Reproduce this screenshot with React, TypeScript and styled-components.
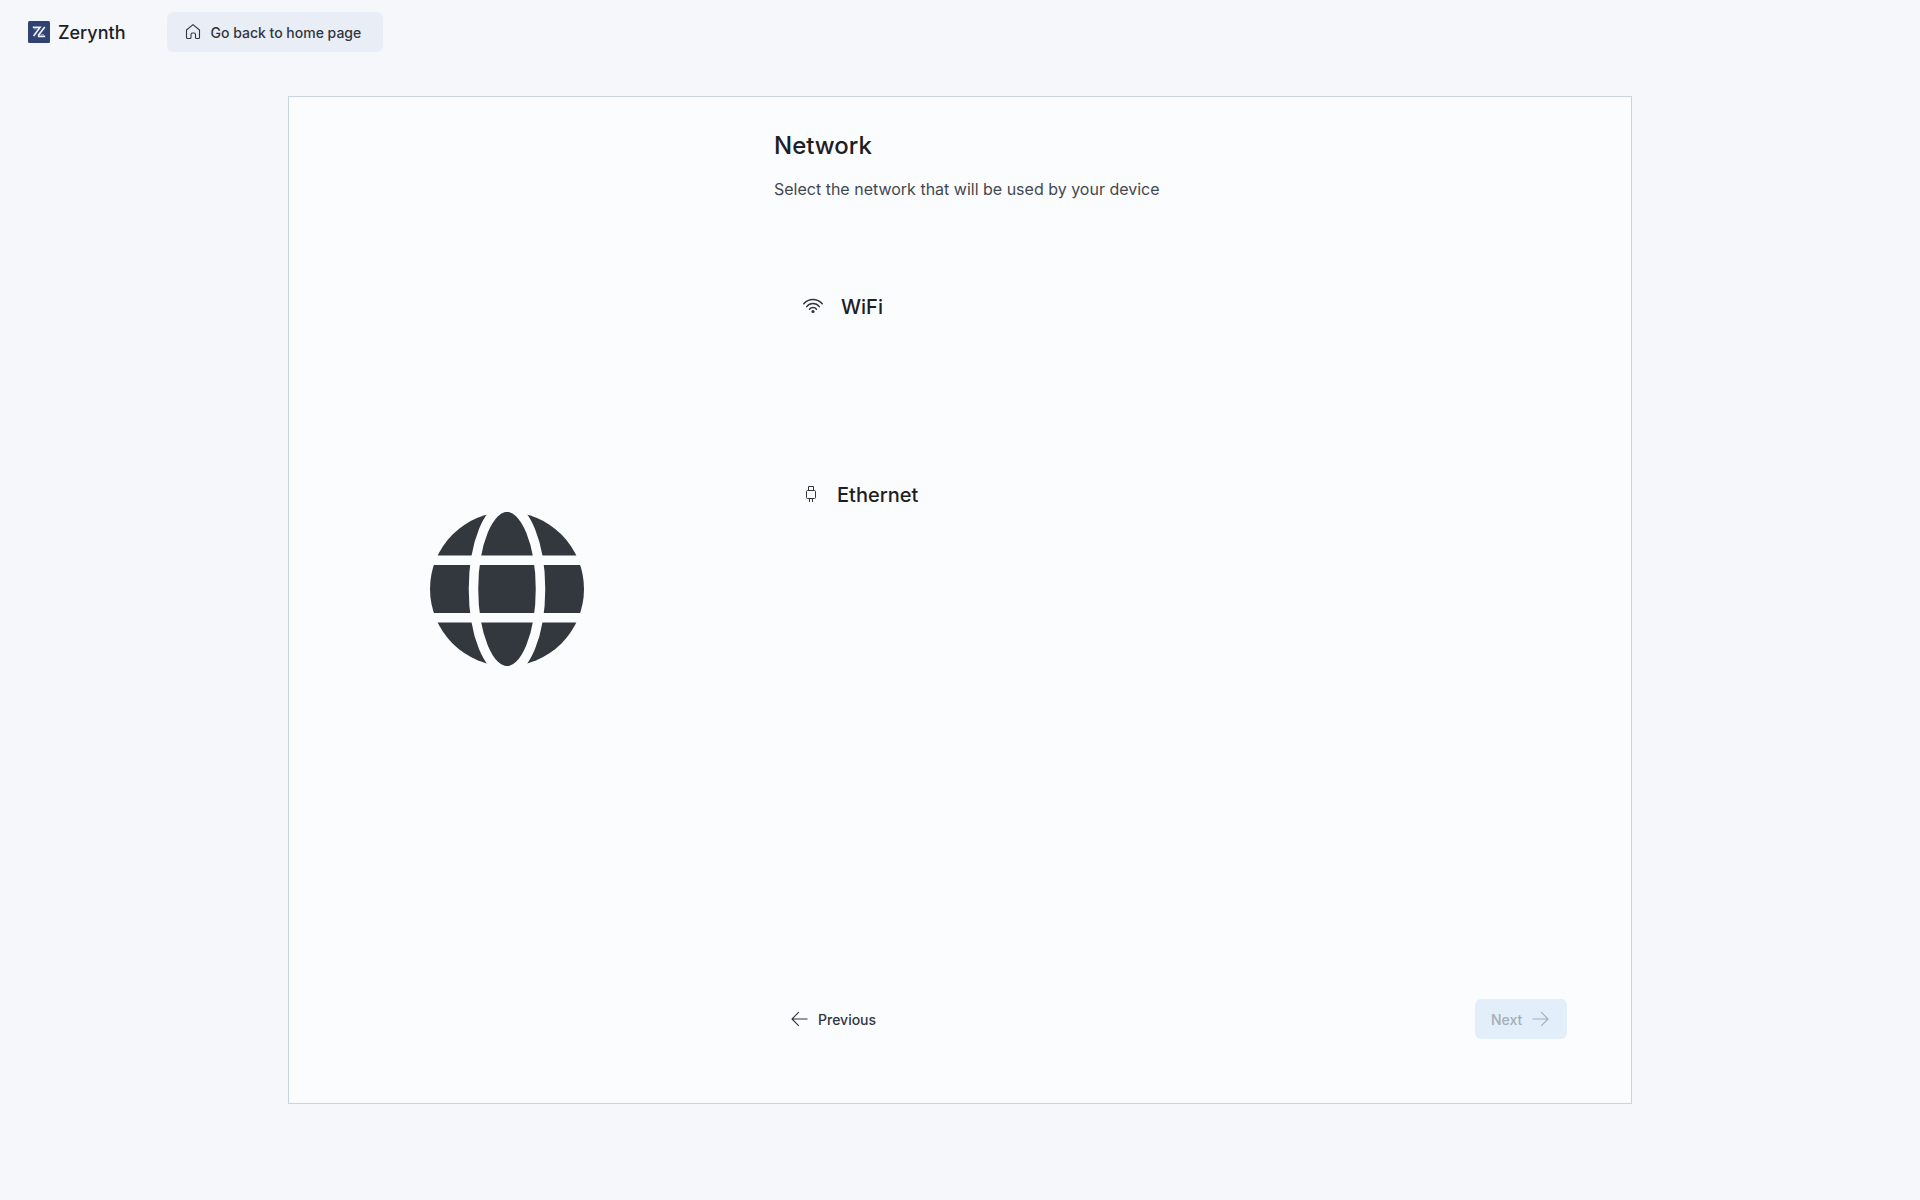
import React from "react";
import styled, { createGlobalStyle } from "styled-components";

const GlobalStyle = createGlobalStyle`
  *, *::before, *::after { box-sizing: border-box; }
  body {
    margin: 0;
    background: #f6f7fb;
    color: #1c2024;
    font-family: Inter, "Liberation Sans", sans-serif;
    font-size: 16px;
  }
`;

const Page = styled.div`
  min-height: 100vh;
  display: flex;
  flex-direction: column;
`;

const TopBar = styled.header`
  display: flex;
  align-items: center;
  gap: 41px;
  padding: 12px 28px;
`;

const Brand = styled.a`
  display: flex;
  align-items: center;
  gap: 8px;
  color: inherit;
  font-size: 18px;
  line-height: 24px;
  font-weight: 500;
  text-decoration: none;
`;

const Wordmark = styled.span`
  padding-top: 2px;
`;

const Button = styled.button<{ $tone?: "soft" | "primary" }>`
  display: flex;
  align-items: center;
  gap: 10px;
  height: 40px;
  min-width: ${(p) => (p.$tone === "soft" ? "216px" : "92px")};
  padding: 2px 16px 0;
  border: 0;
  border-radius: 6px;
  background: ${(p) =>
    p.$tone === "soft" ? "#e9edf6" : p.$tone === "primary" ? "#e2effb" : "transparent"};
  color: #31363f;
  font: 500 14px/20px Inter, "Liberation Sans", sans-serif;
  cursor: pointer;

  &:disabled {
    color: #a5adb6;
    cursor: default;
  }
`;

const Card = styled.main`
  flex: 1;
  display: grid;
  grid-template-columns: 436px 1fr;
  width: 70%;
  margin: 32px auto 96px;
  border: 1px solid #cbd3de;
  background: #fbfcfe;
`;

const Illustration = styled.div`
  display: grid;
  place-items: center;
  padding-bottom: 22px;
  color: #33383f;
`;

const Content = styled.section`
  display: flex;
  flex-direction: column;
  padding: 32px 64px 64px 49px;
`;

const Title = styled.h1`
  margin: 0;
  font-size: 24px;
  line-height: 34px;
  font-weight: 500;
`;

const Subtitle = styled.p`
  margin: 14px 0 0;
  color: #43484e;
  font-size: 16px;
  line-height: 24px;
`;

const Options = styled.div`
  display: flex;
  flex-direction: column;
  gap: 64px;
  margin-top: 44px;
`;

const Option = styled.button`
  display: flex;
  align-items: center;
  gap: 17px;
  height: 124px;
  padding: 0 28px;
  border: 0;
  background: transparent;
  color: #1c2024;
  font: 500 20px/28px Inter, "Liberation Sans", sans-serif;
  cursor: pointer;
`;

const Actions = styled.footer`
  display: flex;
  justify-content: space-between;
  margin-top: auto;
`;

const Logo = () => (
  <svg width="22" height="22" viewBox="0 0 22 22" aria-hidden="true">
    <rect width="22" height="22" rx="1.5" fill="#2f4272" />
    <path
      d="M4.8 6.4H12L5.6 15M16.8 6L10.2 14.6M9.8 15.4H17.2"
      fill="none"
      stroke="#eef1f8"
      strokeWidth="1.7"
    />
    <path d="M6 8H9.5M12.5 13.6H16" stroke="#8f9bbb" strokeWidth="1" />
  </svg>
);

const HomeIcon = () => (
  <svg width="18" height="18" viewBox="0 0 18 18" fill="none" stroke="currentColor" strokeWidth="1.1" strokeLinejoin="round" aria-hidden="true">
    <path d="M3.5 6L10 .6L16.5 6V13.5Q16.5 14.5 15.5 14.5H13.5Q12.5 14.5 12.5 13.5V10.5Q12.5 9 11 9H9.5Q8 9 8 10.5V13.5Q8 14.5 7 14.5H4.5Q3.5 14.5 3.5 13.5Z" />
  </svg>
);

const WifiIcon = () => (
  <svg width="22" height="22" viewBox="0 0 22 22" fill="none" stroke="#31363b" strokeWidth="1.5" strokeLinecap="round" aria-hidden="true">
    <path d="M1.8 7.8A12 12 0 0 1 20.2 7.8M4.7 10.6A8 8 0 0 1 17.3 10.6M7.5 13.2A4.4 4.4 0 0 1 14.5 13.2" />
    <circle cx="11" cy="15.5" r="1.6" fill="#31363b" stroke="none" />
  </svg>
);

const PlugIcon = () => (
  <svg width="18" height="18" viewBox="0 0 18 18" fill="none" stroke="#31363b" aria-hidden="true">
    <path d="M6.5 4.5V.5H11.5V4.5M7.5 12.5V16M10.5 12.5V16" />
    <rect x="4.5" y="4.5" width="9" height="8" rx="1" />
  </svg>
);

const ArrowIcon = ({ direction }: { direction: "left" | "right" }) => (
  <svg width="18" height="18" viewBox="0 0 18 18" fill="none" stroke="currentColor" strokeWidth="1.1" strokeLinejoin="round" aria-hidden="true">
    <path
      d={
        direction === "left"
          ? "M17.5 8H2M8.8 1.2L2 8L8.800 14.8"
          : "M.5 8H16M9.2 1.2L16 8L9.2 14.8"
      }
    />
  </svg>
);

const GlobeIcon = () => (
  <svg width="154" height="154" viewBox="0 0 154 154" aria-hidden="true">
    <circle cx="77" cy="77" r="77" fill="currentColor" />
    <g fill="none" stroke="#fbfcfe" strokeWidth="9.5">
      <path d="M0 48.3H154M0 105.7H154" />
      <ellipse cx="77" cy="77" rx="33.5" ry="82" />
    </g>
  </svg>
);

export default function App() {
  return (
    <Page>
      <GlobalStyle />
      <TopBar>
        <Brand href="#">
          <Logo />
          <Wordmark>Zerynth</Wordmark>
        </Brand>
        <Button type="button" $tone="soft">
          <HomeIcon />
          Go back to home page
        </Button>
      </TopBar>
      <Card>
        <Illustration>
          <GlobeIcon />
        </Illustration>
        <Content>
          <Title>Network</Title>
          <Subtitle>Select the network that will be used by your device</Subtitle>
          <Options>
            <Option type="button">
              <WifiIcon />
              WiFi
            </Option>
            <Option type="button">
              <PlugIcon />
              Ethernet
            </Option>
          </Options>
          <Actions>
            <Button type="button">
              <ArrowIcon direction="left" />
              Previous
            </Button>
            <Button type="button" $tone="primary" disabled>
              Next
              <ArrowIcon direction="right" />
            </Button>
          </Actions>
        </Content>
      </Card>
    </Page>
  );
}
